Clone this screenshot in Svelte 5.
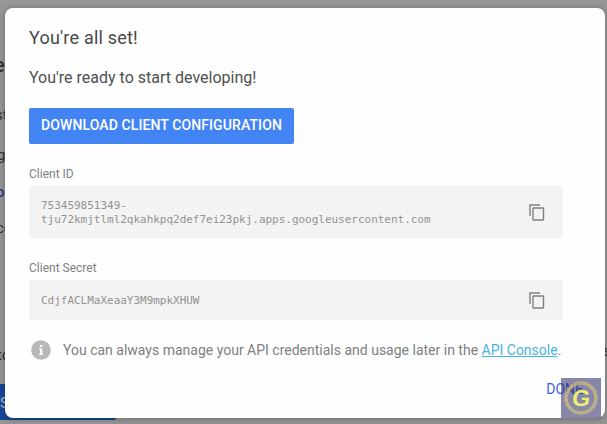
<script>
    const credentials = [
        { label: "Client ID", value: "753459851349-tju72kmjtlml2qkahkpq2def7ei23pkj.apps.googleusercontent.com", tall: true },
        { label: "Client Secret", value: "CdjfACLMaXeaaY3M9mpkXHUW", tall: false },
    ];

    // laurel leaves around the badge letter
    const leaves = Array.from({ length: 24 }, (_, i) => i * 15);
</script>

<div class="screen">
    <div class="page">
        <div class="line heading">e</div>
        <div class="line step">st</div>
        <div class="line query">g</div>
        <div class="line link">on</div>
        <div class="line note">co</div>
        <div class="line last"><span>to</span><span class="end">s</span></div>
        <div class="page-button">S</div>
    </div>

    <div class="dialog">
        <h1>You're all set!</h1>
        <p class="ready">You're ready to start developing!</p>
        <button class="download">DOWNLOAD CLIENT CONFIGURATION</button>

        {#each credentials as item}
            <div class="label">{item.label}</div>
            <div class="field" class:tall={item.tall}>
                <code>{item.value}</code>
                <svg class="copy" width="16" height="17" viewBox="0 0 16 17">
                    <path d="M1 12V1H11" />
                    <rect x="4" y="4" width="10.5" height="12" rx="0.5" />
                </svg>
            </div>
        {/each}

        <div class="info">
            <svg width="20" height="20" viewBox="0 0 20 20">
                <circle cx="10" cy="10" r="9.8" fill="#b9b9b9" />
                <path d="M9 5h2.2v2H9zM8 8.4h3.2v5.2H12V15H8.4v-1.4H9V9.6H8z" fill="#fff" />
            </svg>
            <span>You can always manage your API credentials and usage later in the <a href="#console">API Console</a>.</span>
        </div>

        <button class="done">DONE</button>
    </div>

    <svg class="badge" viewBox="0 0 40 40">
        <rect width="40" height="40" fill="#31316f" fill-opacity="0.58" />
        <circle cx="20" cy="20" r="14.5" fill="none" stroke="#c8b878" stroke-opacity="0.5" stroke-width="3" />
        {#each leaves as angle}
            <ellipse cx="20" cy="4.8" rx="3.2" ry="1.5" fill="#d0bd7c" fill-opacity="0.55" transform="rotate({angle} 20 20) rotate(-28 20 5)" />
        {/each}
        <text x="-8.5" y="28" transform="translate(28 0) skewX(-6) translate(3 0)" text-anchor="middle">G</text>
    </svg>
</div>

<style>
    :global(body) {
        background: #979797;
        font-family: Roboto, sans-serif;
    }

    .screen {
        position: relative;
        width: 607px;
        height: 424px;
        overflow: hidden;
    }

    .page {
        display: flex;
        flex-direction: column;
        padding-top: 55px;
        color: #303030;
        font-size: 15px;
    }

    .line {
        height: 20px;
        line-height: 20px;
        margin-left: -3px;
    }

    .heading {
        font-size: 20px;
        font-weight: 500;
        margin-left: -6px;
    }

    .step {
        margin-top: 30px;
        margin-left: -5px;
    }

    .query {
        margin-top: 20px;
    }

    .link {
        margin-top: 17px;
        color: #293e83;
        margin-left: -4px;
        font-weight: 500;
    }

    .note {
        margin-top: 16px;
        margin-left: -4px;
    }

    .last {
        display: flex;
        justify-content: space-between;
        margin-top: 107px;
        margin-left: -3px;
        margin-right: -4px;
    }

    .end {
        margin-top: -4px;
    }

    .page-button {
        box-sizing: border-box;
        width: 120px;
        height: 36px;
        margin-top: 19px;
        margin-left: -4px;
        padding-left: 4px;
        border-radius: 2px;
        background: #174796;
        color: #9aabc9;
        font-size: 14px;
        font-weight: 500;
        line-height: 38px;
    }

    .dialog {
        position: absolute;
        top: 8px;
        left: 5px;
        box-sizing: border-box;
        width: 600px;
        height: 410px;
        padding: 18px 42px 0 24px;
        border-radius: 8px;
        background: #fefefe;
        box-shadow: 0 1px 7px rgba(0, 0, 0, 0.3);
        display: flex;
        flex-direction: column;
        align-items: flex-start;
    }

    h1 {
        margin: 0;
        color: #484848;
        font-size: 18px;
        font-weight: 400;
        line-height: 24px;
        letter-spacing: 0.2px;
    }

    .ready {
        margin: 16px 0 0;
        color: #505050;
        font-size: 16px;
        line-height: 24px;
    }

    button {
        border: 0;
        font-family: inherit;
    }

    .download {
        width: 265px;
        height: 36px;
        margin-top: 18px;
        padding: 0 0 2px;
        border-radius: 2px;
        background: #4384f4;
        color: #fff;
        font-size: 14px;
        font-weight: 500;
        letter-spacing: 0.1px;
        white-space: nowrap;
    }

    .label {
        margin-top: 22px;
        color: #808080;
        font-size: 12px;
        line-height: 16px;
    }

    .field {
        box-sizing: border-box;
        display: flex;
        align-items: center;
        justify-content: space-between;
        width: 534px;
        height: 40px;
        margin-top: 4px;
        padding: 0 18px 0 12px;
        border-radius: 2px;
        background: #f3f3f3;
    }

    .tall {
        height: 52px;
    }

    code {
        width: 440px;
        padding-top: 2px;
        color: #929292;
        font-family: "DejaVu Sans Mono", monospace;
        font-size: 11px;
        line-height: 14px;
        letter-spacing: -0.02px;
    }

    .copy {
        fill: none;
        stroke: #808080;
        stroke-width: 1.4;
    }

    .info {
        display: flex;
        align-items: center;
        gap: 12px;
        height: 20px;
        margin-top: 20px;
        margin-left: 2px;
        color: #808080;
        font-size: 14px;
        white-space: nowrap;
    }

    a {
        color: #47b4e6;
    }

    .done {
        align-self: flex-end;
        margin: 19px -20px 0 0;
        padding: 0;
        background: none;
        color: #3c64d8;
        font-size: 14px;
        line-height: 20px;
    }

    .badge {
        position: absolute;
        left: 561px;
        top: 378px;
        width: 40px;
        height: 40px;
    }

    .badge text {
        fill: #eeee6a;
        font: bold 23px "Liberation Sans", sans-serif;
    }
</style>
